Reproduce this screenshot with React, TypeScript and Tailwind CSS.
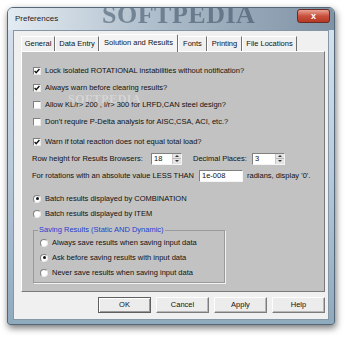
import React from 'react';

const font = "font-['Liberation_Sans',Arial,sans-serif]";

function CheckBox({ checked }: { checked?: boolean }) {
  return (
    <div className="w-[8px] h-[8px] shrink-0 bg-white border border-t-[#808080] border-l-[#808080] border-b-[#e8e8e8] border-r-[#e8e8e8] flex items-center justify-center">
      {checked && (
        <svg width="6" height="6" viewBox="0 0 6 6">
          <polyline points="0.6,3 2.2,4.7 5.4,1" fill="none" stroke="#111" strokeWidth="1.4" />
        </svg>
      )}
    </div>
  );
}

function Radio({ checked }: { checked?: boolean }) {
  return (
    <div className="w-[8px] h-[8px] shrink-0 rounded-full bg-white border border-t-[#808080] border-l-[#808080] border-b-[#e8e8e8] border-r-[#e8e8e8] flex items-center justify-center">
      {checked && <div className="w-[3px] h-[3px] rounded-full bg-[#111]" />}
    </div>
  );
}

function Spinner({ value, width }: { value: string; width: string }) {
  return (
    <div className={`${width} h-[12px] flex bg-white border border-t-[#808080] border-l-[#808080] border-b-[#f4f4f4] border-r-[#f4f4f4]`}>
      <div className="flex-1 pl-[2px] flex items-center">{value}</div>
      <div className="w-[9px] flex flex-col bg-[#e4e4e4] border-l border-[#c8c8c8]">
        <div className="flex-1 flex items-center justify-center border-b border-[#b8b8b8]">
          <div className="w-0 h-0 border-l-[2px] border-r-[2px] border-b-[2px] border-l-transparent border-r-transparent border-b-[#333]" />
        </div>
        <div className="flex-1 flex items-center justify-center">
          <div className="w-0 h-0 border-l-[2px] border-r-[2px] border-t-[2px] border-l-transparent border-r-transparent border-t-[#333]" />
        </div>
      </div>
    </div>
  );
}

const tabs = [
  { label: 'General', w: 'w-[34px]' },
  { label: 'Data Entry', w: 'w-[44px]' },
  { label: 'Solution and Results', w: 'w-[79px]', active: true },
  { label: 'Fonts', w: 'w-[29px]' },
  { label: 'Printing', w: 'w-[35px]' },
  { label: 'File Locations', w: 'w-[55px]' },
];

const checks = [
  { label: 'Lock isolated ROTATIONAL instabilities without notification?', checked: true },
  { label: 'Always warn before clearing results?', checked: true },
  { label: 'Allow KL/r> 200 , l/r> 300 for LRFD,CAN steel design?', checked: false },
  { label: "Don't require P-Delta analysis for AISC,CSA, ACI, etc.?", checked: false },
];

export default function App() {
  return (
    <div className={`w-[350px] h-[339px] bg-white overflow-hidden pt-[7px] pl-[7px] text-[7.5px] leading-none text-[#111] ${font}`}>
      {/* window frame */}
      <div className="w-[328px] h-[318px] rounded-t-[6px] rounded-b-[3px] border border-[#55687a] bg-gradient-to-b from-[#d9e4ee] via-[#b9cbdc] to-[#8fa9bd] shadow-[1px_3px_7px_rgba(0,0,0,0.55)] flex flex-col">
        {/* title bar */}
        <div className="relative h-[22px] flex items-center pl-[7px] overflow-hidden rounded-t-[5px] bg-gradient-to-r from-[#e3ebf2] via-[#a9b9c7] to-[#7f93a5]">
          <span className="relative z-10 text-[8px] text-[#1c1c1c]">Preferences</span>
          <span className="absolute left-[94px] top-[-6px] text-[26px] leading-none font-bold tracking-[0.5px] text-[#2f4459] opacity-50 blur-[0.7px] font-['Liberation_Serif',serif]">
            SOFTPEDIA
          </span>
          <div className="absolute right-[4px] top-[1px] w-[33px] h-[14px] rounded-[3px] border border-[#6b2a22] bg-gradient-to-b from-[#e8a396] via-[#c8503c] to-[#b43a26] flex items-center justify-center">
            <span className="text-white text-[9px] font-bold leading-none">x</span>
          </div>
        </div>
        {/* client area */}
        <div className="mx-[5px] h-[290px] bg-[#f0f0f0] border border-[#8596a6] flex flex-col pt-[2px] pl-[7px] pr-[2px]">
          {/* tab strip */}
          <div className="h-[18px] flex items-end">
            {tabs.map((t) =>
              t.active ? (
                <div
                  key={t.label}
                  className={`${t.w} h-[18px] -mb-[1px] relative z-10 bg-[#f4f4f4] border-t border-l border-r border-t-white border-l-white border-r-[#6f6f6f] rounded-t-[2px] flex items-center justify-center pb-[1px]`}
                >
                  {t.label}
                </div>
              ) : (
                <div
                  key={t.label}
                  className={`${t.w} h-[15px] bg-[#f0f0f0] border-t border-l border-r border-t-white border-l-white border-r-[#6f6f6f] flex items-center justify-center`}
                >
                  {t.label}
                </div>
              )
            )}
          </div>
          {/* panel */}
          <div className="relative w-[304px] h-[241px] bg-[#c2c2c2] border border-t-white border-l-white border-r-[#7a7a7a] border-b-[#7a7a7a] pt-[10px] pl-[11px] flex flex-col">
            <span className="absolute left-[46px] top-[41px] text-[12px] font-bold text-white opacity-30 blur-[0.4px] font-['Liberation_Serif',serif] tracking-[0.5px]">
              SOFTPEDIA
            </span>
            {checks.map((c) => (
              <div key={c.label} className="h-[17px] flex items-center">
                <CheckBox checked={c.checked} />
                <span className="ml-[4px] relative">{c.label}</span>
              </div>
            ))}
            <div className="mt-[3px] h-[17px] flex items-center">
              <CheckBox checked />
              <span className="ml-[4px]">Warn if total reaction does not equal total load?</span>
            </div>
            <div className="h-[17px] flex items-center -ml-[1px]">
              <span className="w-[119px]">Row height for Results Browsers:</span>
              <Spinner value="18" width="w-[31px]" />
              <span className="ml-[11px] w-[59px]">Decimal Places:</span>
              <Spinner value="3" width="w-[33px]" />
            </div>
            <div className="h-[18px] flex items-center -ml-[1px]">
              <span className="w-[167px]">For rotations with an absolute value LESS THAN</span>
              <div className="w-[44px] h-[12px] bg-white border border-t-[#808080] border-l-[#808080] border-b-[#f4f4f4] border-r-[#f4f4f4] flex items-center pl-[2px]">
                1e-008
              </div>
              <span className="ml-[4px]">radians, display '0'.</span>
            </div>
            <div className="mt-[5px] h-[17px] flex items-center">
              <Radio checked />
              <span className="ml-[4px]">Batch results displayed by COMBINATION</span>
            </div>
            <div className="h-[14px] flex items-center">
              <Radio />
              <span className="ml-[4px]">Batch results displayed by ITEM</span>
            </div>
            <fieldset className="mt-[4px] w-[192px] border border-[#9a9a9a] shadow-[1px_1px_0_#f2f2f2] pl-[4px] pb-[2px]">
              <legend className="px-[1px] leading-[10px] text-[#1f3fd0]">Saving Results (Static AND Dynamic)</legend>
              <div className="pl-[2px] flex flex-col">
                <div className="h-[15px] flex items-center">
                  <Radio />
                  <span className="ml-[4px]">Always save results when saving input data</span>
                </div>
                <div className="h-[15px] flex items-center">
                  <Radio checked />
                  <span className="ml-[4px]">Ask before saving results with input data</span>
                </div>
                <div className="h-[15px] flex items-center">
                  <Radio />
                  <span className="ml-[4px]">Never save results when saving input data</span>
                </div>
              </div>
            </fieldset>
          </div>
          {/* buttons */}
          <div className="mt-[5px] w-[304px] h-[16px] flex justify-end gap-[5px]">
            {['OK', 'Cancel', 'Apply', 'Help'].map((b) => (
              <div
                key={b}
                className={`w-[53px] h-[16px] flex items-center justify-center bg-[#ececec] border ${
                  b === 'OK'
                    ? 'border-[#5f5f5f] shadow-[inset_1px_1px_0_#fff,inset_-1px_-1px_0_#9a9a9a]'
                    : 'border-t-[#fdfdfd] border-l-[#fdfdfd] border-r-[#7c7c7c] border-b-[#7c7c7c] shadow-[inset_-1px_-1px_0_#b8b8b8]'
                }`}
              >
                {b}
              </div>
            ))}
          </div>
        </div>
      </div>
    </div>
  );
}
